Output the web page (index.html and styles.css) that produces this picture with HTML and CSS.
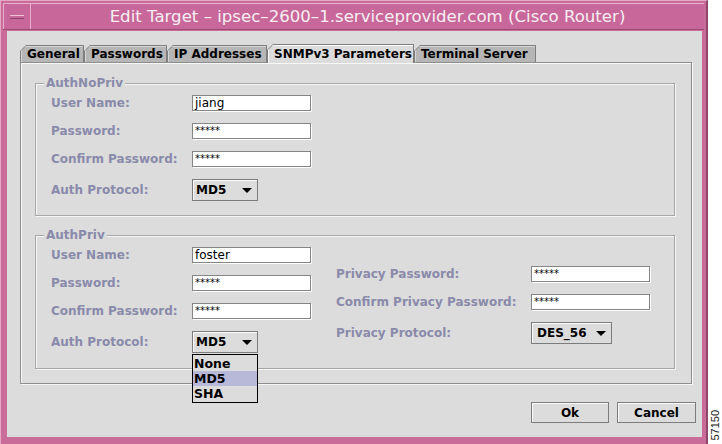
FILE: index.html
```html
<!DOCTYPE html>
<html lang="en">
<head>
  <meta charset="UTF-8">
  <title>Edit Target</title>
  <link rel="stylesheet" href="styles.css">
</head>
<body>

<div class="screen">
  <div class="window">
    <div class="titlebar">
      <div class="menu-btn"><span class="menu-bar"></span></div>
      <div class="title">Edit Target – ipsec–2600–1.serviceprovider.com (Cisco Router)</div>
    </div>

    <div class="client">
      <div class="tabs">
        <div class="tab tab-general"><span>General</span></div>
        <div class="tab tab-passwords"><span>Passwords</span></div>
        <div class="tab tab-ip"><span>IP Addresses</span></div>
        <div class="tab tab-snmp active"><span>SNMPv3 Parameters</span></div>
        <div class="tab tab-term"><span>Terminal Server</span></div>
      </div>

      <div class="panel">
        <fieldset class="group">
          <legend>AuthNoPriv</legend>
          <div class="form">
            <label>User Name:</label>
            <div class="field">jiang</div>
            <label>Password:</label>
            <div class="field secret">*****</div>
            <label>Confirm Password:</label>
            <div class="field secret">*****</div>
            <label>Auth Protocol:</label>
            <div class="combo"><span>MD5</span><i class="arrow"></i></div>
          </div>
        </fieldset>

        <fieldset class="group group-priv">
          <legend>AuthPriv</legend>
          <div class="cols">
            <div class="form">
              <label>User Name:</label>
              <div class="field">foster</div>
              <label>Password:</label>
              <div class="field secret">*****</div>
              <label>Confirm Password:</label>
              <div class="field secret">*****</div>
              <label>Auth Protocol:</label>
              <div class="combo-wrap">
                <div class="combo"><span>MD5</span><i class="arrow"></i></div>
                <ul class="popup">
                  <li>None</li>
                  <li class="selected">MD5</li>
                  <li>SHA</li>
                </ul>
              </div>
            </div>

            <div class="form form-right">
              <label>Privacy Password:</label>
              <div class="field secret">*****</div>
              <label>Confirm Privacy Password:</label>
              <div class="field secret">*****</div>
              <label>Privacy Protocol:</label>
              <div class="combo combo-wide"><span>DES_56</span><i class="arrow"></i></div>
            </div>
          </div>
        </fieldset>
      </div>

      <div class="buttons">
        <button class="btn">Ok</button>
        <button class="btn btn-cancel">Cancel</button>
      </div>
    </div>
  </div>

  <div class="fig-id"><span>57150</span></div>
</div>

</body>
</html>
```

FILE: styles.css
```css
body {
  margin: 0;
  background-color: #fff;
  font-family: "DejaVu Sans", sans-serif;
  color: #000;
}
.screen {
  display: flex;
  width: 722px;
  height: 444px;
  overflow: hidden;
}

/* window frame */
.window {
  width: 708px;
  height: 444px;
  box-sizing: border-box;
  display: flex;
  flex-direction: column;
  background-color: #c96c99;
  border-top: 1px solid #e4a8c6;
  border-left: 1px solid #e4a8c6;
  border-right: 2px solid #8e476b;
  padding: 2px 2px 3px 2px;
}
.titlebar {
  display: flex;
  height: 27px;
  box-sizing: border-box;
  background-color: #c8689a;
  border-top: 1px solid #e8b0cc;
  border-bottom: 1px solid #9c4c74;
}
.menu-btn {
  width: 26px;
  display: flex;
  align-items: center;
  justify-content: center;
  border-right: 1px solid #e8b0cc;
  border-left: 1px solid #e8b0cc;
}
.menu-bar {
  width: 14px;
  height: 2px;
  border-top: 1px solid #efc4d9;
  border-bottom: 1px solid #8e476b;
  background-color: #c8689a;
}
.title {
  flex: 1;
  text-align: center;
  color: #f7eef3;
  font-size: 16.6px;
  line-height: 25px;
  white-space: nowrap;
}

.client {
  flex: 1;
  margin: 1px 2px 4px 4px;
  background-color: #dcdcdc;
  padding: 13px 6px 0 13px;
  display: flex;
  flex-direction: column;
}

/* tabs */
.tabs {
  display: flex;
  align-items: flex-end;
  height: 18px;
}
.tab {
  height: 17px;
  box-sizing: border-box;
  padding: 1px 1px 0 1px;
  background-color: #7e7e7e;
  clip-path: polygon(6px 0, 100% 0, 100% 100%, 0 100%, 0 6px);
  font-size: 12px;
  font-weight: bold;
}
.tab span {
  display: block;
  height: 100%;
  padding-left: 6px;
  line-height: 16px;
  background-color: #b6b6b6;
  box-shadow: inset 1px 1px 0 #d6d6d6;
  clip-path: polygon(5px 0, 100% 0, 100% 100%, 0 100%, 0 5px);
}
.tab-general { width: 64px; }
.tab-passwords { width: 83px; }
.tab-ip { width: 100px; }
.tab-snmp { width: 147px; }
.tab-term { width: 122px; }
.tab.active {
  height: 19px;
  position: relative;
  z-index: 1;
  margin-bottom: -1px;
  padding-bottom: 0;
}
.tab.active span {
  background-color: #dcdcdc;
  box-shadow: inset 1px 1px 0 #fafafa;
  line-height: 18px;
}

.panel {
  width: 672px;
  box-sizing: border-box;
  border: 1px solid #8e8e8e;
  box-shadow: inset 1px 1px 0 #f8f8f8, 1px 1px 0 #f8f8f8;
  padding: 13px 16px 14px 14px;
}

/* group boxes */
.group {
  margin: 0;
  min-width: 0;
  padding: 5px 0 14px 15px;
  border: 1px solid #a6a6a6;
  box-shadow: inset 1px 1px 0 #f6f6f6, 1px 1px 0 #f6f6f6;
}
.group-priv {
  margin-top: 12px;
  padding-bottom: 15px;
}
legend {
  margin-left: -7px;
  padding: 0 2px;
  font-size: 12px;
  font-weight: bold;
  line-height: 14px;
  color: #8a8aaa;
  background-color: #dcdcdc;
}
.cols {
  display: flex;
  gap: 25px;
}
.form {
  display: grid;
  grid-template-columns: 141px 119px;
  grid-template-rows: 16px 16px 16px 22px;
  row-gap: 12px;
  align-items: center;
}
.form-right {
  padding-top: 19px;
  grid-template-columns: 195px 119px;
  grid-template-rows: 16px 16px 22px;
  align-self: flex-start;
}
label {
  font-size: 12px;
  font-weight: bold;
  line-height: 16px;
  color: #8a8aaa;
  white-space: nowrap;
}

/* controls */
.field {
  height: 16px;
  box-sizing: border-box;
  background-color: #fff;
  border: 1px solid #858585;
  box-shadow: 1px 1px 0 #fff;
  padding-left: 2px;
  font-size: 12px;
  line-height: 14px;
}
.field.secret {
  font-size: 10px;
}
.combo-wrap {
  position: relative;
  height: 22px;
}
.combo {
  width: 66px;
  height: 22px;
  box-sizing: border-box;
  display: flex;
  align-items: center;
  justify-content: space-between;
  padding: 0 5px 0 3px;
  border: 1px solid #7c7c7c;
  box-shadow: inset 1px 1px 0 #fafafa;
  background-color: #dcdcdc;
  font-size: 12px;
  font-weight: bold;
}
.combo-wide {
  width: 81px;
  padding-left: 5px;
}
.arrow {
  width: 0;
  height: 0;
  border-left: 5px solid transparent;
  border-right: 5px solid transparent;
  border-top: 5px solid #000;
}
.popup {
  position: absolute;
  top: 23px;
  left: 0;
  width: 66px;
  box-sizing: border-box;
  margin: 0;
  padding: 1px 0;
  list-style: none;
  border: 1px solid #000;
  background-color: #dcdcdc;
  z-index: 2;
}
.popup li {
  padding-left: 1px;
  font-size: 12.5px;
  font-weight: bold;
  line-height: 15px;
}
.popup li.selected {
  background-color: #b8b8d8;
}

/* bottom buttons */
.buttons {
  display: flex;
  justify-content: flex-end;
  gap: 8px;
  margin-top: 18px;
}
.btn {
  width: 78px;
  height: 21px;
  padding: 0;
  border: 1px solid #7c7c7c;
  box-shadow: inset 1px 1px 0 #fafafa;
  background-color: #dcdcdc;
  font-family: "DejaVu Sans", sans-serif;
  font-size: 12px;
  font-weight: bold;
  color: #000;
}
.btn-cancel {
  width: 79px;
}

.fig-id {
  flex: 1;
  display: flex;
  align-items: flex-end;
  justify-content: center;
  padding-bottom: 3px;
}
.fig-id span {
  writing-mode: vertical-rl;
  transform: rotate(180deg);
  font-family: "Liberation Sans", sans-serif;
  font-size: 11px;
  line-height: 11px;
  color: #222;
}
```
